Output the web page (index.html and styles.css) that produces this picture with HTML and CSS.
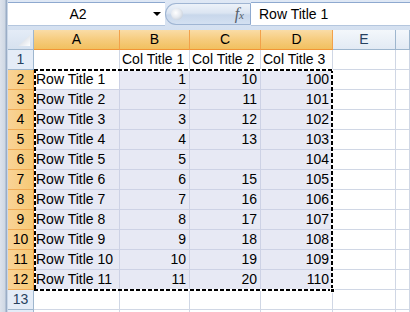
FILE: index.html
```html
<!DOCTYPE html>
<html>
<head>
<meta charset="utf-8">
<link rel="stylesheet" href="styles.css">
</head>
<body>
<div class="app">
  <div class="edge"></div>
  <div class="main">
    <div class="fbar">
      <div class="namebox"><span class="name">A2</span><span class="arrow"></span></div>
      <div class="pill"><span class="knob"></span><span class="fx">f<span class="x">x</span></span></div>
      <div class="formula">Row Title 1</div>
    </div>
    <div class="sheet">
      <div class="corner"></div>
      <div class="h hs">A</div><div class="h hs">B</div><div class="h hs">C</div><div class="h hs">D</div><div class="h">E</div><div class="h"></div>

      <div class="r">1</div><div class="c"></div><div class="c">Col Title 1</div><div class="c">Col Title 2</div><div class="c">Col Title 3</div><div class="c"></div><div class="c"></div>

      <div class="r rs">2</div><div class="c a">Row Title 1</div><div class="c s n">1</div><div class="c s n">10</div><div class="c s n">100</div><div class="c"></div><div class="c"></div>
      <div class="r rs">3</div><div class="c s">Row Title 2</div><div class="c s n">2</div><div class="c s n">11</div><div class="c s n">101</div><div class="c"></div><div class="c"></div>
      <div class="r rs">4</div><div class="c s">Row Title 3</div><div class="c s n">3</div><div class="c s n">12</div><div class="c s n">102</div><div class="c"></div><div class="c"></div>
      <div class="r rs">5</div><div class="c s">Row Title 4</div><div class="c s n">4</div><div class="c s n">13</div><div class="c s n">103</div><div class="c"></div><div class="c"></div>
      <div class="r rs">6</div><div class="c s">Row Title 5</div><div class="c s n">5</div><div class="c s n"></div><div class="c s n">104</div><div class="c"></div><div class="c"></div>
      <div class="r rs">7</div><div class="c s">Row Title 6</div><div class="c s n">6</div><div class="c s n">15</div><div class="c s n">105</div><div class="c"></div><div class="c"></div>
      <div class="r rs">8</div><div class="c s">Row Title 7</div><div class="c s n">7</div><div class="c s n">16</div><div class="c s n">106</div><div class="c"></div><div class="c"></div>
      <div class="r rs">9</div><div class="c s">Row Title 8</div><div class="c s n">8</div><div class="c s n">17</div><div class="c s n">107</div><div class="c"></div><div class="c"></div>
      <div class="r rs">10</div><div class="c s">Row Title 9</div><div class="c s n">9</div><div class="c s n">18</div><div class="c s n">108</div><div class="c"></div><div class="c"></div>
      <div class="r rs">11</div><div class="c s">Row Title 10</div><div class="c s n">10</div><div class="c s n">19</div><div class="c s n">109</div><div class="c"></div><div class="c"></div>
      <div class="r rs">12</div><div class="c s">Row Title 11</div><div class="c s n">11</div><div class="c s n">20</div><div class="c s n">110</div><div class="c"></div><div class="c"></div>

      <div class="r">13</div><div class="c"></div><div class="c"></div><div class="c"></div><div class="c"></div><div class="c"></div><div class="c"></div>
      <div class="r"></div><div class="c"></div><div class="c"></div><div class="c"></div><div class="c"></div><div class="c"></div><div class="c"></div>

      <div class="ants"></div>
      <div class="handle"></div>
    </div>
  </div>
</div>
</body>
</html>
```
FILE: styles.css
```css
* { box-sizing: border-box; }
html, body { margin: 0; padding: 0; }
body {
  width: 410px;
  height: 312px;
  overflow: hidden;
  background: #fff;
  font-family: "Liberation Sans", Arial, sans-serif;
  font-size: 14px;
  color: #000;
}
.app { display: flex; height: 312px; overflow: hidden; }
.edge {
  width: 8px;
  flex: none;
  background: linear-gradient(90deg, #dde3ec 0, #cfd8e4 5px, #9aadc6 6px, #9aadc6 7px, #c9d6e7 7px);
}
.main { flex: 1; min-width: 0; display: flex; flex-direction: column; }

/* formula bar */
.fbar {
  display: flex;
  height: 30px;
  flex: none;
  padding-top: 2px;
  align-items: flex-start;
  background: linear-gradient(#dfe8f5, #d4e0f0);
}
.namebox {
  width: 157px;
  height: 24px;
  flex: none;
  background: #fff;
  border-top: 1px solid #8ea9cf;
  border-bottom: 1px solid #b4c6de;
  display: flex;
  align-items: center;
}
.name { width: 140px; text-align: center; line-height: 22px; }
.arrow {
  margin-left: 5px;
  width: 0; height: 0;
  border-left: 4px solid transparent;
  border-right: 4px solid transparent;
  border-top: 4px solid #000;
}
.pill {
  width: 86px;
  height: 22px;
  margin-top: 1px;
  flex: none;
  border: 1px solid #9fb5d3;
  border-right: 1px solid #8ea9cf;
  border-radius: 11px 0 0 11px;
  background: linear-gradient(#edf2f9, #dbe5f2 45%, #c8d7eb 55%, #d3e0f1);
  display: flex;
  align-items: center;
}
.knob {
  width: 12px; height: 12px;
  margin-left: 5px;
  border-radius: 50%;
  background: radial-gradient(circle at 40% 40%, #ffffff 0, #e6eaf0 45%, #b6c1cf 100%);
}
.fx {
  margin-left: auto;
  margin-right: 6px;
  font-family: "Liberation Serif", serif;
  font-style: italic;
  font-size: 16px;
  color: #555e6a;
  line-height: 20px;
}
.fx .x { font-size: 11px; }
.formula {
  flex: 1;
  height: 24px;
  background: #fff;
  border-top: 1px solid #8ea9cf;
  border-bottom: 1px solid #b4c6de;
  padding-left: 8px;
  line-height: 22px;
  white-space: nowrap;
}

/* sheet */
.sheet {
  position: relative;
  display: grid;
  grid-template-columns: 26px 86px 70px 71px 72px 63px 1fr;
  grid-auto-rows: 20px;
}
.c {
  border-right: 1px solid #d0d7e5;
  border-bottom: 1px solid #d0d7e5;
  padding: 0 2px;
  line-height: 19px;
  white-space: nowrap;
  overflow: hidden;
}
.n { text-align: right; padding-right: 3px; }
.s { background: #e7e9f4; border-color: #cdd2e5; }
.a { background: #fff; border-color: #cdd2e5; }

.corner {
  position: relative;
  background: linear-gradient(#e4ecf7, #d6e1ef);
  border-right: 1px solid #9eb6ce;
  border-bottom: 1px solid #9eb6ce;
}
.corner::after {
  content: "";
  position: absolute;
  right: 3px; bottom: 3px;
  width: 12px; height: 11px;
  clip-path: polygon(100% 0, 100% 100%, 0 100%);
  background: linear-gradient(135deg, #c4ccd8, #ffffff);
}
.h {
  text-align: center;
  line-height: 19px;
  color: #27415f;
  background: linear-gradient(#f3f7fb, #e2eaf4);
  border-right: 1px solid #9eb6ce;
  border-bottom: 1px solid #9eb6ce;
}
.hs {
  color: #000;
  background: linear-gradient(#fadca6, #f6cc7e 50%, #f1c05f);
  border-right-color: #f2a14a;
  border-bottom-color: #f29536;
}
.r {
  text-align: center;
  line-height: 19px;
  color: #27415f;
  background: #e4ecf7;
  border-right: 1px solid #9eb6ce;
  border-bottom: 1px solid #9eb6ce;
}
.rs {
  color: #000;
  background: linear-gradient(90deg, #f9d397, #f6c974);
  border-right-color: #f29536;
  border-bottom-color: #f0aa55;
}

/* copy marquee over range A2:D12 */
.ants {
  position: absolute;
  left: 26px;
  top: 39px;
  width: 299px;
  height: 222px;
  pointer-events: none;
  background:
    repeating-linear-gradient(90deg, #000 0 4px, #fff 4px 6px) left top / 100% 2px no-repeat,
    repeating-linear-gradient(90deg, #000 0 4px, #fff 4px 6px) left bottom / 100% 2px no-repeat,
    repeating-linear-gradient(180deg, #000 0 4px, #fff 4px 6px) left top / 2px 100% no-repeat,
    repeating-linear-gradient(180deg, #000 0 4px, #fff 4px 6px) right top / 2px 100% no-repeat;
}
.handle {
  position: absolute;
  left: 322px;
  top: 258px;
  width: 5px;
  height: 5px;
  background: #000;
  border: 1px solid #fff;
}
```
